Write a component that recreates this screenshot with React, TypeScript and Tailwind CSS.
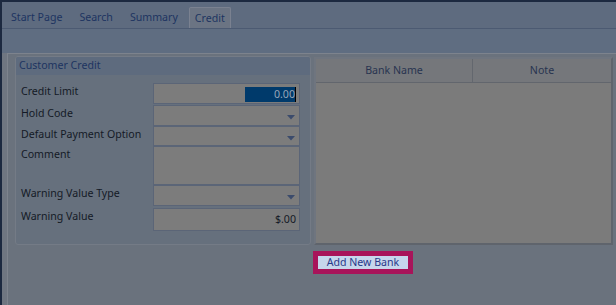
import React from "react";

const font = { fontFamily: '"Noto Sans", "Open Sans", sans-serif' };

function Arrow() {
  return (
    <svg width="8" height="5" viewBox="0 0 8 5" className="absolute right-[4px] top-[9px]">
      <path d="M0 0 H8 L4 4.5 Z" fill="#3b4b6c" />
    </svg>
  );
}

function Row({ label, h, mt = 0, children }: { label: string; h: number; mt?: number; children?: React.ReactNode }) {
  return (
    <div className="flex" style={{ marginTop: mt }}>
      <div className="w-[137px] pl-[5px] leading-[16px] text-[#141a26]">{label}</div>
      <div
        className="relative w-[147px] border border-[#5b6577] bg-[#7c7c7c]"
        style={{ height: h }}
      >
        {children}
      </div>
    </div>
  );
}

export default function App() {
  return (
    <div className="w-[616px] h-[305px] overflow-hidden bg-[#6a727d] text-[10.6px]" style={font}>
      <div className="flex h-full flex-col border-l-2 border-t-2 border-[#1c2940]">
        {/* Tab strip */}
        <div className="flex h-[26px] items-end bg-[#5e6b7f] pl-[8px] text-[#1d3461]">
          <div className="flex h-[21px] items-center px-[1px] pt-[1px]">Start Page</div>
          <div className="ml-[15px] flex h-[21px] items-center px-[1px] pt-[1px]">Search</div>
          <div className="ml-[15px] flex h-[21px] items-center px-[1px] pt-[1px]">Summary</div>
          <div className="ml-[10px] flex h-[21px] items-center rounded-t-[2px] border border-b-0 border-[#7a8190] bg-[#6b7483] px-[5px] pt-[1px]">
            Credit
          </div>
        </div>
        <div className="h-px bg-[#4c5a72]" />
        <div className="h-[24px] bg-[#5f6d81]" />
        {/* Content */}
        <div className="flex flex-1">
          <div className="w-[5px] bg-[#6f7681]" />
          <div className="flex-1 border-l border-t border-[#7d838d] bg-[#6a727d]">
            <div className="flex pt-[2px]">
              {/* Group */}
              <div className="ml-[7px] flex h-[189px] w-[296px] flex-col overflow-hidden rounded-[3px] border border-[#747b86] bg-[#66707d]">
                <div className="flex h-[18px] items-center bg-[#5e6b7e] pl-[3px] text-[#1d3461]">
                  Customer Credit
                </div>
                <div className="pt-[8px]">
                  <Row label="Credit Limit" h={21}>
                    <div className="absolute right-[3px] top-[3px] flex h-[15px] items-center">
                      <div className="flex h-[15px] w-[50px] items-center justify-end bg-[#003a6b] text-[#97a5b8]">0.00</div>
                      <div className="h-[15px] w-px bg-black" />
                    </div>
                  </Row>
                  <Row label="Hold Code" h={21} mt={1}>
                    <Arrow />
                  </Row>
                  <Row label="Default Payment Option" h={20}>
                    <Arrow />
                  </Row>
                  <Row label="Comment" h={39} />
                  <Row label="Warning Value Type" h={21}>
                    <Arrow />
                  </Row>
                  <Row label="Warning Value" h={23} mt={2}>
                    <div className="absolute right-[3px] top-0 flex h-full items-center text-[#141a26]">$.00</div>
                  </Row>
                </div>
              </div>
              {/* Grid */}
              <div className="ml-[3px] mt-[1px] flex h-[188px] w-[299px] flex-col border-2 border-[#6f757f] border-r-[#5f646c] border-b-[#5f646c] bg-[#7b7b7b]">
                <div className="flex h-[24px] border-b border-[#62666d] bg-[#75777b] text-[#283450]">
                  <div className="flex w-[157px] items-center justify-center border-r border-[#63676e] pt-[1px]">Bank Name</div>
                  <div className="flex flex-1 items-center justify-center pt-[1px]">Note</div>
                </div>
              </div>
            </div>
            <div className="ml-[305px] mt-[6px] flex h-[23px] w-[100px] items-center justify-center bg-[#a8145a]">
              <div className="flex h-[13px] w-[90px] items-center justify-center bg-[#c6d6ec] text-[#28398a]">
                Add New Bank
              </div>
            </div>
          </div>
        </div>
      </div>
    </div>
  );
}
